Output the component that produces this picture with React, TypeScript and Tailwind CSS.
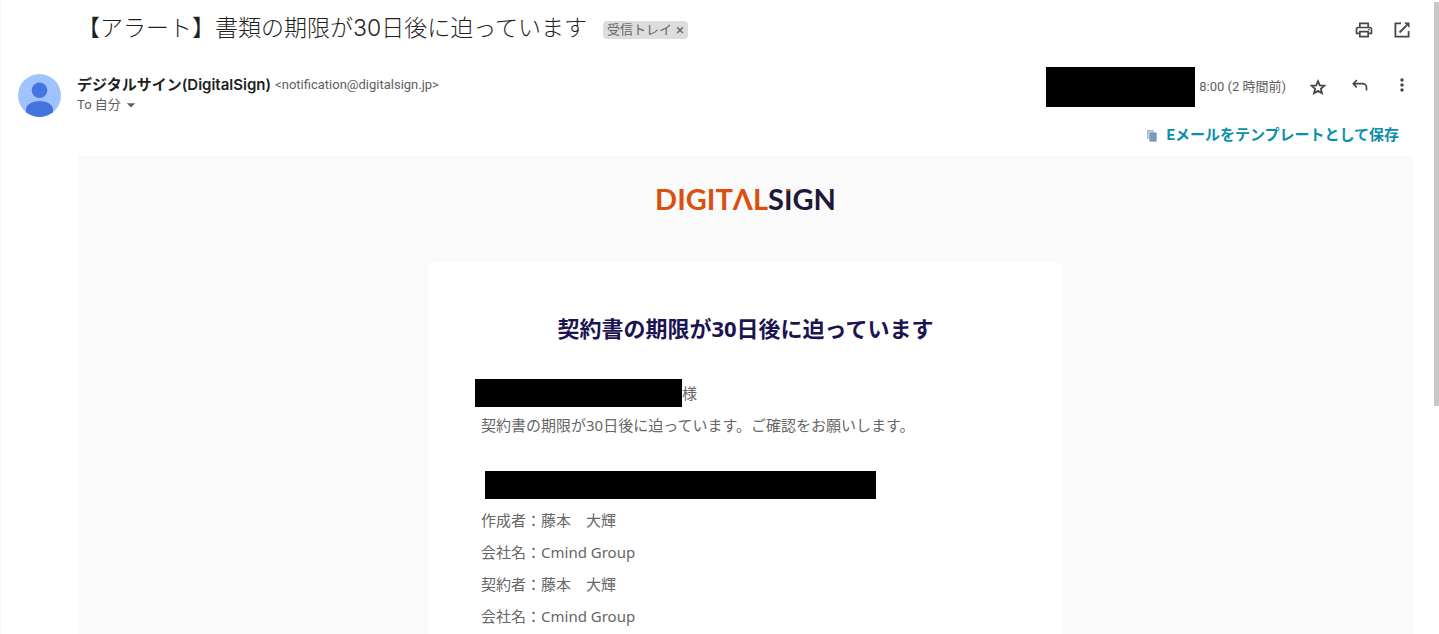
import { MdArrowDropDown, MdMoreVert, MdOutlinePrint } from 'react-icons/md';

const DETAILS = [
  { label: '作成者', value: '藤本　大輝' },
  { label: '会社名', value: 'Cmind Group' },
  { label: '契約者', value: '藤本　大輝' },
  { label: '会社名', value: 'Cmind Group' },
];

function StarIcon() {
  return (
    <svg viewBox="0 0 20 20" className="h-5 w-5" fill="none" stroke="currentColor" strokeWidth="1.8" aria-hidden="true">
      <path d="m10 4.200 1.800 4.200 4.500.400-3.400 3 1 4.400L10 13.900l-3.900 2.300 1-4.400-3.400-3 4.500-.400z" />
    </svg>
  );
}

function ReplyIcon() {
  return (
    <svg viewBox="0 0 20 20" className="h-5 w-5" fill="none" stroke="currentColor" strokeWidth="1.7" aria-hidden="true">
      <path d="M6.800 3 3.300 6.700l3.500 3.700M3.500 6.700h9a4 4 0 0 1 4 4v2.800" />
    </svg>
  );
}

function OpenIcon() {
  return (
    <svg viewBox="0 0 20 20" className="h-5 w-5" fill="none" stroke="currentColor" strokeWidth="1.8" aria-hidden="true">
      <path d="M9 3.400H3.400v13.200h13.200V11M7.500 12.500 14.500 5.500" />
      <path d="M12 2.500h5.500V8z" fill="currentColor" stroke="none" />
    </svg>
  );
}

function CopyIcon() {
  return (
    <svg viewBox="0 0 12 12" className="h-3 w-3" aria-hidden="true">
      <rect x="1" y="0" width="7" height="9" rx="1" fill="#a9bcd3" />
      <rect x="3" y="2" width="8" height="10" rx="1.5" fill="#7c98bb" stroke="#fff" strokeWidth=".6" />
    </svg>
  );
}

function Avatar() {
  return (
    <svg viewBox="0 0 43 43" className="h-[43px] w-[43px] shrink-0" role="img" aria-label="avatar">
      <defs>
        <clipPath id="avatar-clip"><circle cx="21.5" cy="21.5" r="21.5" /></clipPath>
      </defs>
      <g clipPath="url(#avatar-clip)">
        <rect width="43" height="43" fill="#a0c3ff" />
        <circle cx="21.5" cy="16.3" r="7.8" fill="#4374e0" />
        <path d="M8 43v-7.500c0-5.500 7-8.500 13.500-8.500S35 30 35 35.500V43z" fill="#4374e0" />
      </g>
    </svg>
  );
}

function Logo() {
  return (
    <div className="flex justify-center font-['Lato','Noto_Sans_CJK_JP',sans-serif] text-[29px] leading-8 font-bold text-[#1e1839]">
      <span className="text-[#d9500f]">DIGITΛL</span>
      <span>S</span>
      <span className="relative">
        I
        <span className="absolute inset-x-0 top-1.5 mx-auto h-0.5 w-1 bg-[#d9500f]" />
      </span>
      <span>GN</span>
    </div>
  );
}

function Subject() {
  return (
    <header className="flex h-14 items-center justify-between">
      <div className="flex items-center gap-4">
        <h1 className="font-['Inter','Noto_Sans_CJK_JP',sans-serif] text-[23px] leading-8 font-light text-[#1f1f1f]">
          【アラート】書類の期限が30日後に迫っています
        </h1>
        <span className="mt-1 flex h-[18px] items-center gap-1 rounded bg-[#ddd] px-1 text-[13px] text-[#666]">
          受信トレイ
          <button aria-label="ラベルを削除" className="text-[15px]">×</button>
        </span>
      </div>
      <div className="mt-1 flex gap-[18px] pr-px text-[#444746]">
        <button aria-label="印刷"><MdOutlinePrint className="h-5 w-5" /></button>
        <button aria-label="新しいウィンドウで開く"><OpenIcon /></button>
      </div>
    </header>
  );
}

function Sender() {
  return (
    <div className="flex flex-1 justify-between">
      <div className="pt-2">
        <div className="flex items-center gap-1 leading-5">
          <span className="font-['Inter','Noto_Sans_CJK_JP',sans-serif] text-[15px] font-semibold text-[#1f1f1f]">
            デジタルサイン(DigitalSign)
          </span>
          <span className="text-[13px] text-[#5e5e5e]">&lt;notification@digitalsign.jp&gt;</span>
        </div>
        <button className="flex items-center text-[13px] leading-5 text-[#5e5e5e]">
          To 自分
          <MdArrowDropDown className="h-5 w-5" />
        </button>
      </div>
      <div className="flex h-10 items-center">
        <div className="h-10 w-[149px] bg-black" />
        <span className="ml-1 text-[13px] text-[#5e5e5e]">8:00 (2 時間前)</span>
        <div className="ml-[22px] flex gap-[22px] pr-px text-[#444746]">
          <button aria-label="スター"><StarIcon /></button>
          <button aria-label="返信"><ReplyIcon /></button>
          <button aria-label="その他" className="pb-1"><MdMoreVert className="h-5 w-5" /></button>
        </div>
      </div>
    </div>
  );
}

function MailBody() {
  return (
    <main className="flex flex-1 flex-col items-center bg-[#fafafa] pt-[27px] font-['Noto_Sans','Noto_Sans_CJK_JP',sans-serif]">
      <Logo />
      <section className="mt-[47px] w-full max-w-[635px] flex-1 rounded-t-lg bg-white px-[47px] pt-[50px]">
        <h2 className="text-center text-[22px] leading-8 font-bold text-[#1c1452]">契約書の期限が30日後に迫っています</h2>
        <div className="mt-[33px] text-[15px] leading-8 text-[#666]">
          <p className="flex items-center">
            <span className="h-7 w-[207px] bg-black" />
            様
          </p>
          <div className="pl-1.5">
            <p>契約書の期限が30日後に迫っています。ご確認をお願いします。</p>
            <div className="mt-[30px] mb-[5px] ml-1 h-7 w-[391px] bg-black" />
            {DETAILS.map((d, i) => (
              <p key={i}>{d.label}：{d.value}</p>
            ))}
          </div>
        </div>
      </section>
    </main>
  );
}

export default function App() {
  return (
    <div className="flex min-h-screen border-l border-[#f6f8fc] bg-white font-['Roboto','Noto_Sans_CJK_JP',sans-serif]">
      <div className="flex flex-1 flex-col pr-[21px] pl-[17px]">
        <div className="pl-[59px]"><Subject /></div>
        <div className="mt-[11px] flex gap-4">
          <div className="pt-[7px]"><Avatar /></div>
          <Sender />
        </div>
        <div className="flex h-[39px] items-center justify-end pr-3.5 pb-0.5">
          <a href="#template" className="flex items-center gap-2 text-[15px] font-bold text-[#0b8fac]">
            <CopyIcon />
            Eメールをテンプレートとして保存
          </a>
        </div>
        <div className="flex flex-1 flex-col pl-[60px]"><MailBody /></div>
      </div>
      <div className="mt-0.5 h-[404px] w-[5px] bg-[#c8c8c8]" />
    </div>
  );
}
